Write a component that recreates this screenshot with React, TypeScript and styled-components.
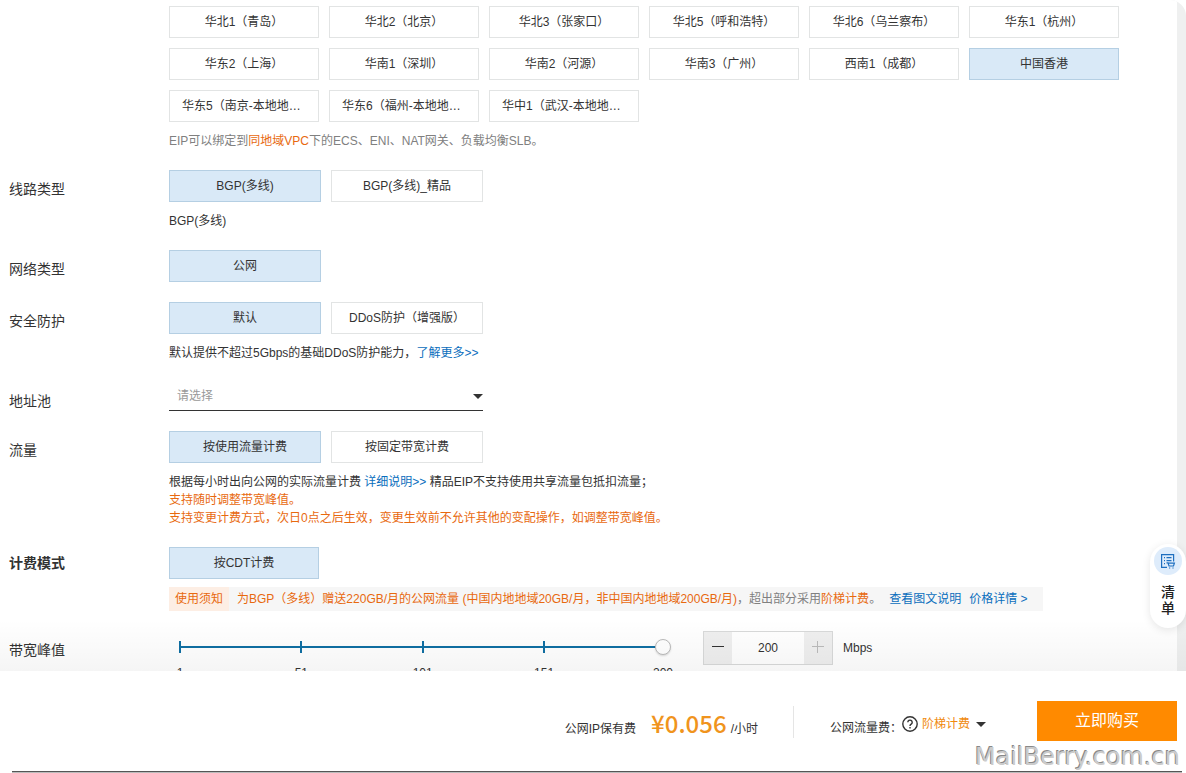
import React, { useState } from "react";
import styled, { createGlobalStyle } from "styled-components";

const GlobalStyle = createGlobalStyle`
  *, *::before, *::after { box-sizing: border-box; }
  body {
    margin: 0;
    background: #fff;
    color: #333;
    font: 12px/18px "Liberation Sans", "Noto Sans CJK SC", sans-serif;
  }
  button, input, select { font: inherit; color: inherit; margin: 0; }
  a { text-decoration: none; }
`;

const Page = styled.div`
  position: relative;
  display: flex;
  flex-direction: column;
  height: 100vh;
  overflow: hidden;
`;

const Main = styled.main`
  position: relative;
  flex: 1;
  min-height: 0;
  overflow: hidden;
  padding-right: 9px;
  background: #eff0f0;
  border-top-right-radius: 16px;

  &::after {
    content: "";
    position: absolute;
    inset: auto 0 0 0;
    height: 52px;
    background: linear-gradient(rgba(0, 0, 0, 0), rgba(0, 0, 0, 0.04));
    pointer-events: none;
  }
`;

const Form = styled.form`
  display: flex;
  flex-direction: column;
  gap: 20px;
  min-height: 100%;
  padding: 6px 9px;
  background: #fff;
`;

const Row = styled.div`
  display: grid;
  grid-template-columns: 160px minmax(0, 1fr);
  align-items: start;
`;

const Label = styled.div<{ $strong?: boolean }>`
  padding-top: ${(p) => (p.$strong ? 6 : 9)}px;
  font-size: 14px;
  line-height: 20px;
  font-weight: ${(p) => (p.$strong ? 700 : 400)};
`;

const Options = styled.div`
  display: flex;
  flex-wrap: wrap;
  gap: 10px;
  max-width: 980px;
`;

const Option = styled.button<{ $wide?: boolean; $on?: boolean }>`
  width: ${(p) => (p.$wide ? 152 : 150)}px;
  height: 32px;
  padding: 1px 12px 0;
  border: 1px solid ${(p) => (p.$on ? "#b5cfe3" : "#e2e4e4")};
  background: ${(p) => (p.$on ? "#d9e9f7" : "#fff")};
  line-height: 29px;
  overflow: hidden;
  text-overflow: ellipsis;
  white-space: nowrap;
  cursor: pointer;
`;

const Hint = styled.div<{ $muted?: boolean }>`
  margin-top: 10px;
  color: ${(p) => (p.$muted ? "#808080" : "#333")};
`;

const Accent = styled.span`
  color: #e8690f;
`;

const Link = styled.a`
  color: #0a6ebd;
`;

const SelectWrap = styled.div`
  display: grid;
  align-items: center;
  justify-items: end;
  width: 314px;
  height: 29px;
  border-bottom: 1px solid #333;

  > * { grid-area: 1 / 1; }
`;

const Select = styled.select`
  appearance: none;
  width: 100%;
  height: 28px;
  padding: 0 24px 0 8px;
  border: 0;
  background: transparent;
  color: #999;
`;

const CaretSvg = styled.svg`
  display: block;
  pointer-events: none;
`;

const Caret = () => (
  <CaretSvg width="10" height="5" viewBox="0 0 10 5" aria-hidden="true">
    <path d="M0 0h10L5 5z" fill="#333" />
  </CaretSvg>
);

const Notice = styled.div`
  display: flex;
  align-items: center;
  width: fit-content;
  height: 24px;
  margin-top: 8px;
  padding-right: 15px;
  background: #f6f6f6;
  color: #808080;
  white-space: nowrap;
`;

const NoticeTag = styled.span`
  height: 24px;
  margin-right: 8px;
  padding: 0 6px;
  background: #fdeee4;
  color: #e8690f;
  line-height: 24px;
`;

const NoticeLinks = styled.span`
  display: flex;
  gap: 8px;
  margin-left: 8px;
`;

const Bandwidth = styled.div`
  display: flex;
  align-items: flex-start;
`;

const Slider = styled.div`
  display: grid;
  width: 485px;
  margin: 8px 39px 0 10px;

  > * { grid-area: 1 / 1; }
`;

const Scale = styled.ul`
  display: grid;
  grid-template-columns: 50fr 50fr 50fr 49fr 2px;
  margin: 0;
  padding: 2px 0 0;
  list-style: none;
  background: linear-gradient(#0f6fa3, #0f6fa3) 0 7px / 100% 2px no-repeat;
`;

const Mark = styled.li<{ $end?: boolean }>`
  display: flex;
  flex-direction: column;
  align-items: center;
  gap: 11px;
  width: 2px;

  &::before {
    content: "";
    flex: none;
    width: 2px;
    height: 12px;
    background: ${(p) => (p.$end ? "transparent" : "#0f6fa3")};
  }
`;

const Range = styled.input`
  appearance: none;
  width: 499px;
  height: 16px;
  margin: 0 -7px;
  background: transparent;

  &::-webkit-slider-thumb {
    appearance: none;
    width: 16px;
    height: 16px;
    border: 1px solid #bbb;
    border-radius: 50%;
    background: #fff;
    box-shadow: 0 1px 2px rgba(0, 0, 0, 0.15);
  }
`;

const Stepper = styled.div`
  display: flex;
  width: 130px;
  height: 34px;
  border: 1px solid #d8d9d9;
`;

const StepButton = styled.button`
  display: grid;
  place-items: center;
  width: 28px;
  padding: 0;
  border: 0;
  background: #efefef;
  color: #333;

  &:disabled { color: #bbb; }
`;

const StepInput = styled.input`
  flex: 1;
  min-width: 0;
  padding: 0;
  border: 0;
  background: #fff;
  text-align: center;
`;

const Unit = styled.span`
  margin-left: 10px;
  line-height: 34px;
`;

const SideTab = styled.button`
  position: absolute;
  right: 0;
  bottom: 145px;
  display: flex;
  flex-direction: column;
  align-items: center;
  gap: 8px;
  width: 36px;
  height: 84px;
  padding: 3px 0 0;
  border: 0;
  border-radius: 18px;
  background: #fff;
  box-shadow: 0 2px 8px rgba(0, 0, 0, 0.1);
  font-family: "Noto Sans CJK SC", sans-serif;
  font-size: 14px;
  font-weight: 500;
  line-height: 16px;
  color: #222;
`;

const TabIcon = styled.span`
  display: grid;
  place-items: center;
  flex: none;
  width: 28px;
  height: 28px;
  border-radius: 50%;
  background: #deecfb;
`;

const TabText = styled.span`
  width: 14px;
`;

const Footer = styled.footer`
  display: flex;
  align-items: flex-start;
  justify-content: flex-end;
  flex: none;
  height: 100px;
  padding: 30px 9px 0;
  background: #fff;
`;

const Fee = styled.div`
  display: flex;
  align-items: baseline;
  padding-top: 4px;
  line-height: 36px;
`;

const Price = styled.strong`
  margin: 0 4px 0 15px;
  color: #f0941d;
  font-family: "Noto Sans CJK SC", sans-serif;
  font-size: 24px;
  font-weight: 500;
`;

const Divider = styled.span`
  width: 1px;
  height: 32px;
  margin: 5px 36px 0 35px;
  background: #e5e5e5;
`;

const Traffic = styled.div`
  display: flex;
  padding-top: 14px;
`;

const TrafficLabel = styled.span`
  padding-top: 4px;
`;

const TierButton = styled.button`
  display: flex;
  align-items: center;
  gap: 6px;
  height: 18px;
  margin-right: 51px;
  padding: 0;
  border: 0;
  background: none;
  color: #f0890d;
`;

const HelpIcon = styled.svg`
  margin: 1px 4px 0 0;
`;

const BuyButton = styled.button`
  width: 140px;
  height: 40px;
  border: 0;
  background: #ff8a00;
  color: #fff;
  font-size: 16px;
`;

const BottomEdge = styled.div`
  flex: none;
  height: 2px;
  margin: 0 4px 0 12px;
  border-top: 1px solid #555;
  background: #bbb;
`;

const Watermark = styled.div`
  position: absolute;
  right: 6px;
  bottom: 2px;
  color: #ccc;
  font-family: "DejaVu Sans", sans-serif;
  font-size: 24px;
  line-height: 28px;
  text-shadow: -1px -1px 0 #888;
  pointer-events: none;
`;

const REGIONS = [
  "华北1（青岛）", "华北2（北京）", "华北3（张家口）", "华北5（呼和浩特）", "华北6（乌兰察布）", "华东1（杭州）",
  "华东2（上海）", "华南1（深圳）", "华南2（河源）", "华南3（广州）", "西南1（成都）", "中国香港",
  "华东5（南京-本地地域）", "华东6（福州-本地地域）", "华中1（武汉-本地地域）",
];

const MARKS = [1, 51, 101, 151, 200];

function Choice({ items, initial, wide }: { items: string[]; initial: string; wide?: boolean }) {
  const [value, setValue] = useState(initial);
  return (
    <Options>
      {items.map((item) => (
        <Option key={item} type="button" $wide={wide} $on={item === value} aria-pressed={item === value} onClick={() => setValue(item)}>
          {item}
        </Option>
      ))}
    </Options>
  );
}

export default function App() {
  const [mbps, setMbps] = useState(200);
  const change = (n: number) => setMbps(Math.min(200, Math.max(1, n || 1)));

  return (
    <Page>
      <GlobalStyle />
      <Main>
        <Form>
          <Row>
            <Label />
            <div>
              <Choice items={REGIONS} initial="中国香港" />
              <Hint $muted>
                EIP可以绑定到<Accent>同地域VPC</Accent>下的ECS、ENI、NAT网关、负载均衡SLB。
              </Hint>
            </div>
          </Row>
          <Row>
            <Label>线路类型</Label>
            <div>
              <Choice wide items={["BGP(多线)", "BGP(多线)_精品"]} initial="BGP(多线)" />
              <Hint>BGP(多线)</Hint>
            </div>
          </Row>
          <Row>
            <Label>网络类型</Label>
            <Choice wide items={["公网"]} initial="公网" />
          </Row>
          <Row>
            <Label>安全防护</Label>
            <div>
              <Choice wide items={["默认", "DDoS防护（增强版）"]} initial="默认" />
              <Hint>
                默认提供不超过5Gbps的基础DDoS防护能力，<Link href="#ddos">了解更多&gt;&gt;</Link>
              </Hint>
            </div>
          </Row>
          <Row>
            <Label as="label" htmlFor="pool">地址池</Label>
            <SelectWrap>
              <Select id="pool" defaultValue="">
                <option value="">请选择</option>
              </Select>
              <Caret />
            </SelectWrap>
          </Row>
          <Row>
            <Label>流量</Label>
            <div>
              <Choice wide items={["按使用流量计费", "按固定带宽计费"]} initial="按使用流量计费" />
              <Hint>
                根据每小时出向公网的实际流量计费 <Link href="#detail">详细说明&gt;&gt;</Link> 精品EIP不支持使用共享流量包抵扣流量；
                <br />
                <Accent>支持随时调整带宽峰值。</Accent>
                <br />
                <Accent>支持变更计费方式，次日0点之后生效，变更生效前不允许其他的变配操作，如调整带宽峰值。</Accent>
              </Hint>
            </div>
          </Row>
          <Row>
            <Label $strong>计费模式</Label>
            <div>
              <Choice items={["按CDT计费"]} initial="按CDT计费" />
              <Notice>
                <NoticeTag>使用须知</NoticeTag>
                <span>
                  <Accent>为BGP（多线）赠送220GB/月的公网流量 (中国内地地域20GB/月，非中国内地地域200GB/月)</Accent>
                  ，超出部分采用<Accent>阶梯计费</Accent>。
                </span>
                <NoticeLinks>
                  <Link href="#guide">查看图文说明</Link>
                  <Link href="#price">价格详情 &gt;</Link>
                </NoticeLinks>
              </Notice>
            </div>
          </Row>
          <Row>
            <Label as="label" htmlFor="bandwidth">带宽峰值</Label>
            <Bandwidth>
              <Slider>
                <Scale>
                  {MARKS.map((m) => (
                    <Mark key={m} $end={m === 200}>{m}</Mark>
                  ))}
                </Scale>
                <Range id="bandwidth" type="range" min={1} max={200} value={mbps} onChange={(e) => change(+e.target.value)} />
              </Slider>
              <Stepper>
                <StepButton type="button" aria-label="减少" onClick={() => change(mbps - 1)}>
                  <svg width="14" height="14" viewBox="0 0 14 14"><path d="M1 5.5h12" stroke="currentColor" /></svg>
                </StepButton>
                <StepInput aria-label="带宽峰值 Mbps" value={mbps} onChange={(e) => change(+e.target.value)} />
                <StepButton type="button" aria-label="增加" disabled={mbps === 200} onClick={() => change(mbps + 1)}>
                  <svg width="14" height="14" viewBox="0 0 14 14"><path d="M1 5.5h12M6.5 0v12" stroke="currentColor" /></svg>
                </StepButton>
              </Stepper>
              <Unit>Mbps</Unit>
            </Bandwidth>
          </Row>
        </Form>
      </Main>

      <Footer>
        <Fee>
          公网IP保有费<Price>¥0.056</Price>/小时
        </Fee>
        <Divider />
        <Traffic>
          <TrafficLabel>公网流量费：</TrafficLabel>
          <HelpIcon width="16" height="16" viewBox="0 0 16 16" fill="none" stroke="#333" strokeWidth="1.4" aria-hidden="true">
            <circle cx="8" cy="8" r="7.2" />
            <path d="M5.8 6.3a2.2 2.2 0 1 1 3.4 1.9C8.400 8.700 8 9 8 9.900M8 11v1.500" />
          </HelpIcon>
          <TierButton type="button">
            阶梯计费
            <Caret />
          </TierButton>
        </Traffic>
        <BuyButton type="button">立即购买</BuyButton>
      </Footer>
      <BottomEdge />

      <SideTab type="button">
        <TabIcon>
          <svg width="16" height="16" viewBox="0 0 16 16" fill="none" stroke="#1f6fc0" strokeWidth="1.200" aria-hidden="true">
            <path d="M7 14.400H1.600V1.600h12v7M4 4.600h1M6.500 4.600h5M4 7.600h1M6.500 7.600h5M4 10.600h1" />
            <path d="M6.500 9.800h1.500l1 3.200h4.500l.9-2.800H8.400" />
            <path d="M9 15h1.200M12.400 15h1.200" />
          </svg>
        </TabIcon>
        <TabText>清单</TabText>
      </SideTab>
      <Watermark>MailBerry.com.cn</Watermark>
    </Page>
  );
}
